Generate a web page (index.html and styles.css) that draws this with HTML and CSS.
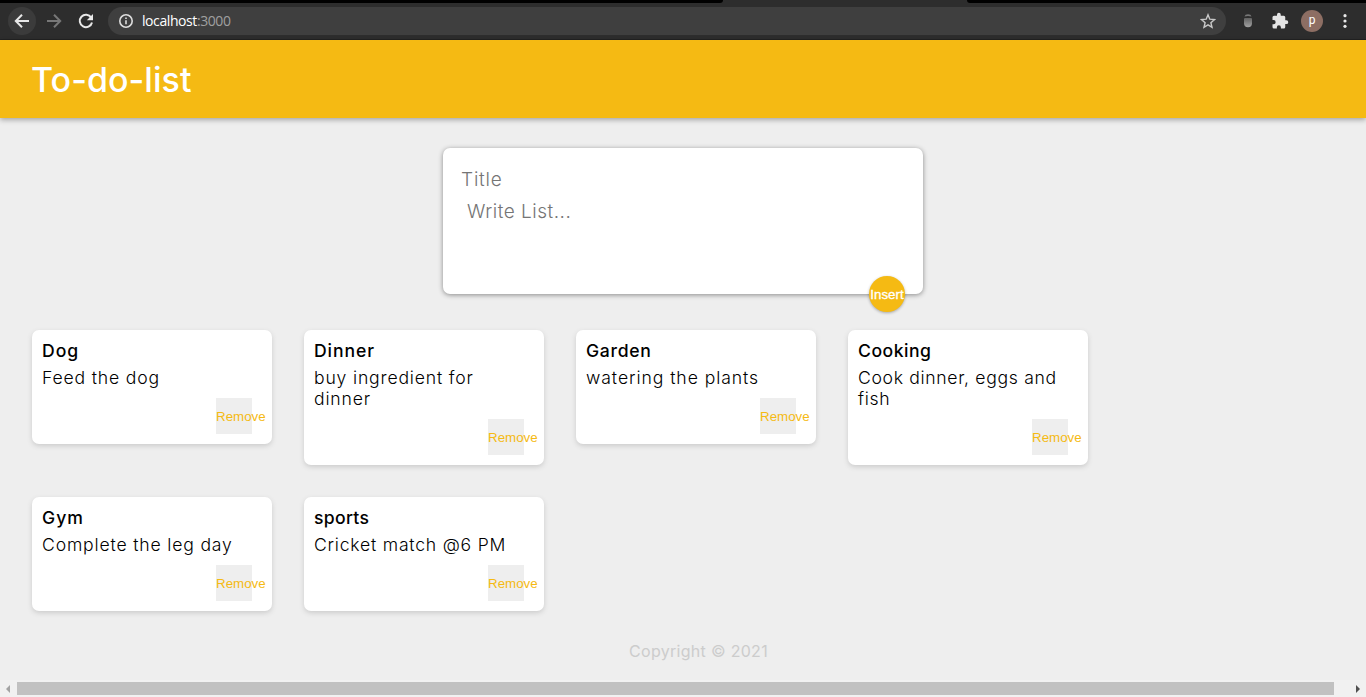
FILE: index.html
```
<!DOCTYPE html>
<html lang="en">
<head>
<meta charset="utf-8">
<title>To-do-list</title>
<link rel="stylesheet" href="styles.css">
</head>
<body>
<div class="browser">
  <div class="tabs"><span class="tab-left"></span><span class="tab-right"></span></div>
  <div class="toolbar">
    <span class="nav back"><svg width="16" height="16" viewBox="0 0 16 16"><path d="M15 8H2M8 1.8 1.8 8 8 14.2"/></svg></span>
    <span class="nav forward"><svg width="16" height="16" viewBox="0 0 16 16"><path d="M1 8h13M8 1.8 14.2 8 8 14.2"/></svg></span>
    <span class="nav reload"><svg width="16" height="16" viewBox="0 0 16 16"><path d="M13.2 4.6A6.2 6.2 0 1 0 14 9.4"/><path class="solid" d="M15 1v6.2H8.8z"/></svg></span>
    <div class="address">
      <svg class="info" width="14" height="14" viewBox="0 0 14 14"><circle cx="7" cy="7" r="6.2"/><path d="M7 6.3v4M7 3.4v1.6"/></svg>
      <span class="url">localhost<span class="port">:3000</span></span>
      <svg class="star" width="16" height="16" viewBox="0 0 16 16"><path d="m8 1.8 1.8 4.4 4.7.4-3.6 3.1 1.1 4.6L8 11.8l-4 2.5 1.1-4.6-3.6-3.1 4.7-.4z"/></svg>
    </div>
    <svg class="extension" width="10" height="16" viewBox="0 0 10 16">
      <defs><linearGradient id="shade" x1="0" y1="0" x2="0" y2="1"><stop offset="0" stop-color="#626262"/><stop offset="1" stop-color="#a2a2a2"/></linearGradient></defs>
      <path class="cap" d="M1.5 3.600Q2 1.200 5 1.200T8.500 3.600L5 3z"/><path fill="url(#shade)" d="M1 6q0-1 1-1h6q1 0 1 1v4.200q0 4-4 4t-4-4z"/></svg>
    <svg class="puzzle" width="18" height="18" viewBox="0 0 24 24"><path d="M20.5 11H19V7a2 2 0 0 0-2-2h-4V3.5a2.5 2.5 0 0 0-5 0V5H4a2 2 0 0 0-2 2v3.8h1.5a2.7 2.7 0 0 1 0 5.4H2V20a2 2 0 0 0 2 2h3.800v-1.500a2.700 2.700 0 0 1 5.400 0V22H17a2 2 0 0 0 2-2v-4h1.500a2.500 2.500 0 0 0 0-5z"/></svg>
    <span class="avatar">p</span>
    <svg class="more" width="4" height="16" viewBox="0 0 4 16"><circle cx="2" cy="2.700" r="1.600"/><circle cx="2" cy="8" r="1.600"/><circle cx="2" cy="13.300" r="1.600"/></svg>
  </div>
</div>
<header class="header"><h1>To-do-list</h1></header>
<main class="main">
  <form class="composer">
    <span class="field-title">Title</span>
    <span class="field-text">Write List...</span>
    <button class="insert" type="button">Insert</button>
  </form>
  <section class="notes">
    <article class="note"><h2 class="t-dog">Dog</h2><p>Feed the dog</p><button type="button">Remove</button></article>
    <article class="note"><h2 class="t-dinner">Dinner</h2><p>buy ingredient for<br>dinner</p><button type="button">Remove</button></article>
    <article class="note"><h2 class="t-garden">Garden</h2><p class="p-garden">watering the plants</p><button type="button">Remove</button></article>
    <article class="note"><h2 class="t-cooking">Cooking</h2><p class="p-cooking">Cook dinner, eggs and<br>fish</p><button type="button">Remove</button></article>
    <article class="note"><h2 class="t-gym">Gym</h2><p>Complete the leg day</p><button type="button">Remove</button></article>
    <article class="note"><h2 class="t-sports">sports</h2><p class="p-sports">Cricket match @6 PM</p><button type="button">Remove</button></article>
  </section>
</main>
<footer class="footer">Copyright © 2021</footer>
<div class="scrollbar"><span class="arrow left"></span><span class="thumb"></span><span class="arrow right"></span></div>
</body>
</html>
```
FILE: styles.css
```
* { box-sizing: border-box; }
body { margin: 0; width: 1366px; height: 697px; overflow: hidden; display: flex; flex-direction: column; background: #eee; font-family: Inter, "Open Sans", sans-serif; }
button, h1, h2, p { margin: 0; padding: 0; }
.browser { height: 40px; background: #2d2d2d; border-bottom: 1px solid #222; flex: none; }
.tabs { height: 3px; display: flex; justify-content: space-between; }
.tab-left { width: 723px; background: #000; border-bottom-right-radius: 3px; }
.tab-right { width: 399px; background: #000; border-bottom-left-radius: 3px; }
.toolbar { height: 36px; display: flex; align-items: center; padding-left: 8px; }
.nav { width: 28px; height: 28px; border-radius: 50%; display: flex; align-items: center; justify-content: center; margin-right: 4px; }
.nav svg { fill: none; stroke: #e8e8e8; stroke-width: 2; }
.nav.back { background: #3b3b3b; }
.nav.forward svg { stroke: #777; }
.nav .solid { fill: #e8e8e8; stroke: none; }
.address { width: 1118px; height: 28px; margin-left: 4px; background: #3f3f3f; border-radius: 14px; display: flex; align-items: center; padding: 0 10px 0 11px; }
.info, .star { fill: none; stroke: #ddd; stroke-width: 1.6; }
.star { stroke: #c8c8c8; stroke-width: 1.4; }
.url { flex: 1; margin-left: 9px; font: 14px/18px "Open Sans", sans-serif; letter-spacing: -.42px; color: #fff; }
.port { color: #a0a0a0; }
.extension { margin-left: 17px; }
.extension .cap { fill: #777; }
.puzzle { margin-left: 18px; fill: #e4e4e4; }
.avatar { width: 22px; height: 22px; margin-left: 12px; border-radius: 50%; background: #8d6e63; color: #fff; font: 12px/20px Roboto, sans-serif; text-align: center; }
.more { margin-left: 20px; fill: #e8e8e8; }
.header { height: 78px; flex: none; background: #f5ba13; padding: 0 31px; box-shadow: 0 2px 5px rgba(0,0,0,.3); }
.header h1 { font: 500 34px/80px Inter, sans-serif; color: #fff; letter-spacing: .05px; }
.main { height: 493px; flex: none; }
.composer { position: relative; width: 480px; height: 146px; margin: 30px auto 36px 443px; padding: 18px 19px; display: flex; flex-direction: column; background: #fff; border-radius: 7px; box-shadow: 0 1px 5px #8a8a8a; color: #757575; font-size: 19px; font-weight: 300; }
.field-title { line-height: 27px; letter-spacing: .8px; margin-left: -1px; }
.field-text { line-height: 27px; letter-spacing: .5px; margin: 5px 0 0 5px; }
.insert { position: absolute; right: 18px; bottom: -18px; width: 36px; height: 36px; border: 0; border-radius: 50%; background: #f5ba13; color: #fff; font: 13.33px "Liberation Sans", sans-serif; -webkit-text-stroke: .3px #fff; display: flex; align-items: center; justify-content: center; box-shadow: 0 1px 3px rgba(0,0,0,.3); }
.notes { display: grid; grid-template-columns: repeat(4, 240px); gap: 32px; padding-left: 32px; align-items: start; }
.note { display: flex; flex-direction: column; padding: 10px; background: #fff; border-radius: 7px; box-shadow: 0 2px 5px #ccc; color: #000; }
.note h2 { font-size: 17.6px; line-height: 22px; font-weight: 500; margin-bottom: 5px; }
.note p { font-size: 17.6px; line-height: 21px; font-weight: 300; letter-spacing: .83px; margin-bottom: 10px; white-space: nowrap; }
.note .t-dog, .note .t-gym { letter-spacing: 1px; }
.note .t-dinner { letter-spacing: .9px; }
.note .t-garden { letter-spacing: .7px; }
.note .t-cooking { letter-spacing: .5px; }
.note .t-sports { letter-spacing: .3px; }
.note .p-garden { letter-spacing: .93px; }
.note .p-cooking { letter-spacing: .67px; }
.note .p-sports { letter-spacing: .78px; }
.note button { align-self: flex-end; margin-right: 10px; width: 36px; height: 36px; border: 0; background: #eee; color: #f5ba13; font: 13.33px "Liberation Sans", sans-serif; white-space: nowrap; text-align: left; }
.footer { margin: 30px 0 0 629px; color: #ccc; font-size: 16px; line-height: 20px; letter-spacing: .3px; font-weight: 400; }
.scrollbar { height: 17px; flex: none; margin-top: auto; display: flex; align-items: center; background: #f1f1f1; padding: 0 6px; }
.thumb { width: 1317px; height: 13px; margin: 0 22px 0 7px; background: #c1c1c1; }
.arrow { border: 4px solid transparent; }
.left { border-width: 4px 4px 4px 0; border-right-color: #a3a3a3; }
.right { border-width: 4px 0 4px 4px; border-left-color: #505050; }
```
